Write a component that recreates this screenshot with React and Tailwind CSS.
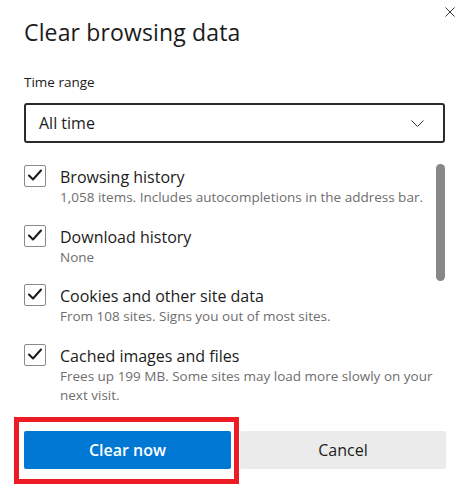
import React from "react";

const items = [
  { title: "Browsing history", sub: "1,058 items. Includes autocompletions in the address bar." },
  { title: "Download history", sub: "None" },
  { title: "Cookies and other site data", sub: "From 108 sites. Signs you out of most sites." },
  { title: "Cached images and files", sub: "Frees up 199 MB. Some sites may load more slowly on your next visit." },
];

function Check() {
  return (
    <div className="w-[22px] h-[22px] shrink-0 -mt-[1px] border border-[#8a8a8a] rounded-[2px] bg-white flex items-center justify-center">
      <svg width="20" height="20" viewBox="0 0 20 20" fill="none">
        <path d="M4 9.5 L8 13.5 L16 4.5" stroke="#1b1b1b" strokeWidth="2" strokeLinecap="round" strokeLinejoin="round" />
      </svg>
    </div>
  );
}

export default function App() {
  return (
    <div className="relative w-[474px] h-[485px] bg-white text-[#1b1b1b] font-['Segoe_UI','Open_Sans',sans-serif] overflow-hidden">
      <button className="absolute left-[445px] top-[7px] w-[10px] h-[10px]">
        <svg width="10" height="10" viewBox="0 0 10 10" fill="none" className="block">
          <path d="M0.5 0.5 L9.5 9.5 M9.5 0.5 L0.5 9.5" stroke="#333" strokeWidth="1" />
        </svg>
      </button>

      <div className="flex flex-col pl-[24px] pr-[29px] pt-[17px]">
        <h1 className="text-[23px] leading-[30px] font-normal tracking-[0.15px]">Clear browsing data</h1>
        <div className="mt-[25px] text-[13.5px] leading-[20px]">Time range</div>
        <div className="mt-[11px] h-[40px] w-[421px] border-2 border-[#2b2b2b] rounded-[3px] flex items-center justify-between pl-[13px] pr-[19px]">
          <span className="text-[16px] leading-[22px]">All time</span>
          <svg width="13" height="7" viewBox="0 0 13 7" fill="none">
            <path d="M0.5 0.5 L6.5 6.5 L12.5 0.5" stroke="#333" strokeWidth="1" />
          </svg>
        </div>

        <div className="mt-[23px] flex w-[421px]">
          <div className="flex-1 flex flex-col gap-[18px]">
            {items.map((it) => (
              <div key={it.title} className="flex gap-[14px]">
                <Check />
                <div className="flex flex-col">
                  <div className="text-[16px] leading-[22px]">{it.title}</div>
                  <div className="text-[13.5px] leading-[19.5px] text-[#6e6e6e]">{it.sub}</div>
                </div>
              </div>
            ))}
          </div>
          <div className="w-[9px] shrink-0">
            <div className="-mt-[2px] h-[117px] w-[9px] rounded-full bg-[#878787]" />
          </div>
        </div>

        <div className="mt-[25px] flex gap-[9px] w-[422px]">
          <button className="h-[38px] w-[207px] bg-[#0078d4] text-white text-[16px] font-semibold rounded-[2px]">Clear now</button>
          <button className="h-[38px] w-[206px] bg-[#ebebeb] text-[#1b1b1b] text-[16px] rounded-[2px]">Cancel</button>
        </div>
      </div>

      <div className="absolute left-[14px] top-[417px] w-[225px] h-[67px] border-[5px] border-[#ed1c24] pointer-events-none" />
    </div>
  );
}
